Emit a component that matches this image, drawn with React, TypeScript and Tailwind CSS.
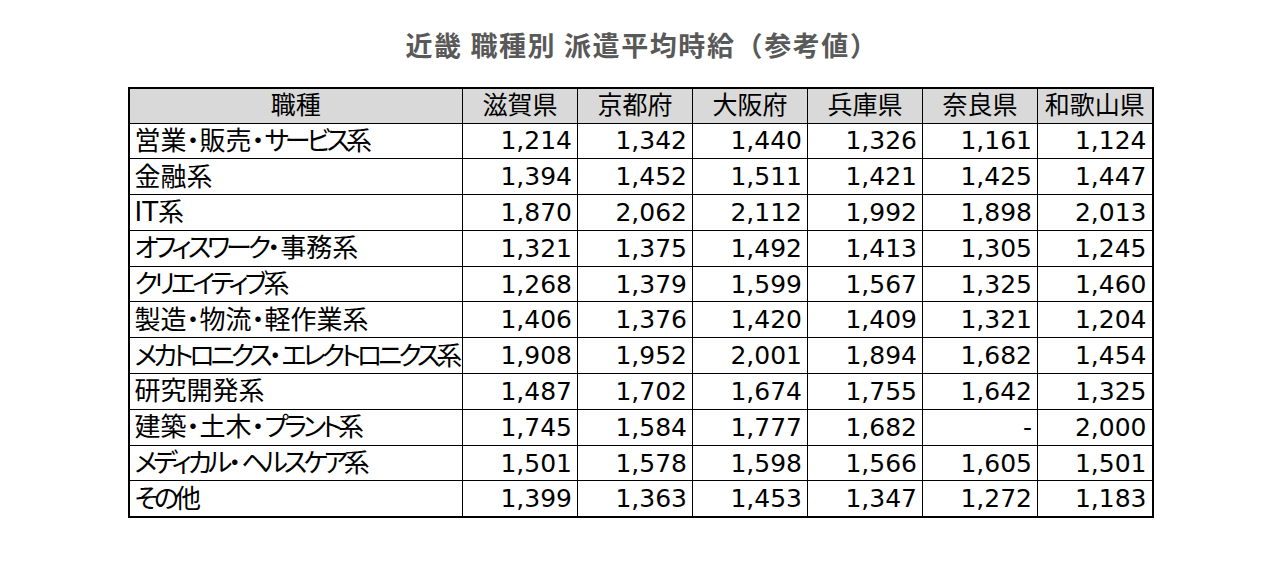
const prefs = ['滋賀県', '京都府', '大阪府', '兵庫県', '奈良県', '和歌山県'];

const rows: [string, string[]][] = [
  ['営業・販売・サービス系', ['1,214', '1,342', '1,440', '1,326', '1,161', '1,124']],
  ['金融系', ['1,394', '1,452', '1,511', '1,421', '1,425', '1,447']],
  ['IT系', ['1,870', '2,062', '2,112', '1,992', '1,898', '2,013']],
  ['オフィスワーク・事務系', ['1,321', '1,375', '1,492', '1,413', '1,305', '1,245']],
  ['クリエイティブ系', ['1,268', '1,379', '1,599', '1,567', '1,325', '1,460']],
  ['製造・物流・軽作業系', ['1,406', '1,376', '1,420', '1,409', '1,321', '1,204']],
  ['メカトロニクス・エレクトロニクス系', ['1,908', '1,952', '2,001', '1,894', '1,682', '1,454']],
  ['研究開発系', ['1,487', '1,702', '1,674', '1,755', '1,642', '1,325']],
  ['建築・土木・プラント系', ['1,745', '1,584', '1,777', '1,682', '-', '2,000']],
  ['メディカル・ヘルスケア系', ['1,501', '1,578', '1,598', '1,566', '1,605', '1,501']],
  ['その他', ['1,399', '1,363', '1,453', '1,347', '1,272', '1,183']],
];

// kana runs are set tighter, like the proportional kana in the original
function JobName({ name }: { name: string }) {
  const parts = name.split(/([\u3040-\u309F\u30A0-\u30FA\u30FC-\u30FF]+)/).filter(Boolean);
  return (
    <>
      {parts.map((p, i) =>
        /[\u3040-\u309F\u30A0-\u30FA\u30FC-\u30FF]/.test(p) ? (
          <span key={i} className="tracking-[-4px]">
            {p}
          </span>
        ) : (
          <span key={i}>{p}</span>
        )
      )}
    </>
  );
}

export default function App() {
  return (
    <div className="w-[1284px] h-[578px] bg-white flex flex-col items-center font-['DejaVu_Sans','Noto_Sans_CJK_JP',sans-serif]">
      <h1 className="mt-[27px] text-[27px] leading-[36px] tracking-[1.6px] font-bold text-[#595959] font-['Noto_Sans_CJK_JP',sans-serif]">
        近畿 職種別 派遣平均時給（参考値）
      </h1>
      <table className="mt-[24px] ml-[-3px] w-[1025px] table-fixed border-collapse border-2 border-black text-[25px] leading-none text-black">
        <colgroup>
          <col className="w-[334px]" />
          {prefs.map((p) => (
            <col key={p} className="w-[115px]" />
          ))}
        </colgroup>
        <thead>
          <tr className="h-[35px] bg-[#d9d9d9]">
            <th className="border border-black font-normal text-center">職種</th>
            {prefs.map((p) => (
              <th key={p} className="border border-black font-normal text-center px-0">
                {p}
              </th>
            ))}
          </tr>
        </thead>
        <tbody>
          {rows.map(([name, vals]) => (
            <tr key={name} className="h-[35.8px]">
              <td className="border border-black pl-[5px] text-left whitespace-nowrap text-[26px] [font-feature-settings:'palt']">
                <JobName name={name} />
              </td>
              {vals.map((v, i) => (
                <td key={i} className="border border-black pr-[5px] text-right">
                  {v}
                </td>
              ))}
            </tr>
          ))}
        </tbody>
      </table>
    </div>
  );
}
